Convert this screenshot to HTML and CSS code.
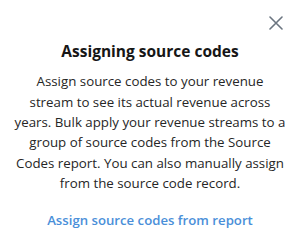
FILE: index.html
```html
<!DOCTYPE html>
<html>
<head>
<meta charset="utf-8">
<link rel="stylesheet" href="styles.css">
</head>
<body>
<div class="popover">
  <button class="close" aria-label="Close">
    <svg width="14" height="14" viewBox="0 0 14 14"><path d="M1 1L13 13M13 1L1 13" stroke="#6b7580" stroke-width="1.6" stroke-linecap="round"/></svg>
  </button>
  <h2 class="title">Assigning source codes</h2>
  <p class="desc">Assign source codes to your revenue stream to see its actual revenue across years. Bulk apply your revenue streams to a group of source codes from the Source Codes report. You can also manually assign from the source code record.</p>
  <a class="link" href="#">Assign source codes from report</a>
</div>
</body>
</html>
```
FILE: styles.css
```css
html, body {
  margin: 0;
  padding: 0;
  background: #ffffff;
}
.popover {
  position: relative;
  width: 300px;
  height: 246px;
  box-sizing: border-box;
  padding: 40px 14px 0;
  display: flex;
  flex-direction: column;
  align-items: center;
  text-align: center;
  font-family: "Open Sans", "Noto Sans", sans-serif;
  color: #262626;
}
.close {
  position: absolute;
  top: 16px;
  right: 17px;
  width: 14px;
  height: 14px;
  padding: 0;
  border: 0;
  background: none;
  display: flex;
}
.title {
  margin: 0;
  font-size: 15.5px;
  font-weight: 700;
  line-height: 22px;
  color: #161616;
}
.desc {
  margin: 9.4px 0 0;
  font-size: 13.3px;
  line-height: 20.3px;
}
.link {
  margin-top: 16.8px;
  font-size: 13.2px;
  line-height: 20px;
  font-weight: 600;
  color: #4a8fd9;
  text-decoration: none;
}
```
